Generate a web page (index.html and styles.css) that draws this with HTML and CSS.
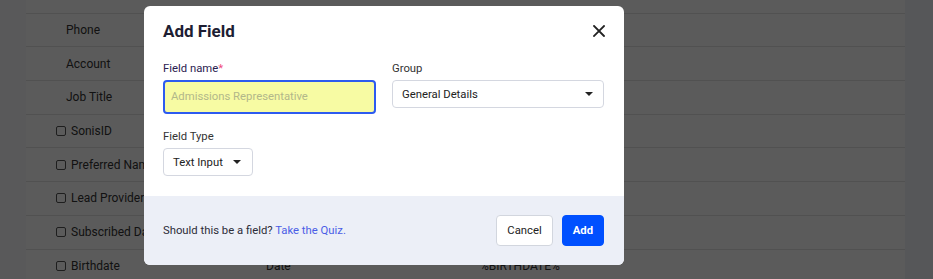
FILE: index.html
```html
<!DOCTYPE html>
<html>
<head>
    <title>Add Field</title>
    <link rel="stylesheet" href="styles.css">
</head>
<body>
<div class="page">
    <div class="side"></div>
    <div class="fields">
        <div class="row"><span class="c1"></span><span class="c2"></span><span class="c3"></span></div>
        <div class="row"><span class="c1 plain">Phone</span><span class="c2"></span><span class="c3"></span></div>
        <div class="row"><span class="c1 plain">Account</span><span class="c2"></span><span class="c3"></span></div>
        <div class="row"><span class="c1 plain">Job Title</span><span class="c2"></span><span class="c3"></span></div>
        <div class="row"><span class="c1"><i class="box"></i>SonisID</span><span class="c2"></span><span class="c3"></span></div>
        <div class="row"><span class="c1"><i class="box"></i>Preferred Name</span><span class="c2"></span><span class="c3"></span></div>
        <div class="row"><span class="c1"><i class="box"></i>Lead Provider</span><span class="c2"></span><span class="c3"></span></div>
        <div class="row"><span class="c1"><i class="box"></i>Subscribed Date</span><span class="c2"></span><span class="c3"></span></div>
        <div class="row"><span class="c1"><i class="box"></i>Birthdate</span><span class="c2">Date</span><span class="c3">%BIRTHDATE%</span></div>
    </div>
    <div class="side right"></div>
</div>

<div class="overlay">
    <div class="modal">
        <div class="modal-header">
            <h2>Add Field</h2>
            <svg class="close" width="12" height="12" viewBox="0 0 12 12">
                <path d="M1 1L11 11M11 1L1 11" stroke="#222" stroke-width="1.8" stroke-linecap="square"/>
            </svg>
        </div>
        <div class="modal-body">
            <div class="field">
                <label class="req">Field name<b>*</b></label>
                <div class="input">Admissions Representative</div>
            </div>
            <div class="field">
                <label>Group</label>
                <div class="select wide"><span>General Details</span><i class="caret"></i></div>
            </div>
            <div class="field second">
                <label>Field Type</label>
                <div class="select"><span>Text Input</span><i class="caret"></i></div>
            </div>
        </div>
        <div class="modal-footer">
            <p>Should this be a field? <a href="#">Take the Quiz.</a></p>
            <div class="buttons">
                <button class="btn">Cancel</button>
                <button class="btn primary">Add</button>
            </div>
        </div>
    </div>
</div>
</body>
</html>
```

FILE: styles.css
```css
html, body {
    width: 100%;
    height: 100%;
    padding: 0px;
    margin: 0px;
    overflow: hidden;
}

body {
    font-family: Roboto, "Liberation Sans", sans-serif;
    font-size: 11.3px;
    color: #333;
    background-color: #f6f7fa;
}

.page {
    display: flex;
    height: 100%;
}

.side {
    width: 26px;
    background-color: #f9fafc;
}
.side.right {
    width: 28px;
    background-color: #f2f4f8;
}

.fields {
    flex: 1;
    background-color: #fff;
    margin-top: -20px;
    font-size: 12px;
}

.row {
    display: flex;
    align-items: center;
    height: 32.7px;
    border-bottom: 1px solid #e4e4e4;
}

.c1 {
    box-sizing: border-box;
    display: flex;
    align-items: center;
    width: 240px;
    padding-left: 30px;
    white-space: nowrap;
    overflow: hidden;
}
.c1.plain {
    padding-left: 40px;
}
.c2 {
    width: 214px;
}
.c3 {
    flex: 1;
}

.box {
    width: 8px;
    height: 8px;
    border: 1px solid #555;
    border-radius: 2px;
    margin-right: 5px;
}

.overlay {
    position: absolute;
    top: 0px;
    left: 0px;
    right: 0px;
    bottom: 0px;
    background-color: rgba(0, 0, 0, 0.645);
    padding: 6px 0px 0px 144px;
}

.modal {
    width: 480px;
    background-color: #fff;
    border-radius: 6px;
    overflow: hidden;
}

.modal-header {
    display: flex;
    justify-content: space-between;
    align-items: center;
    padding: 10px 19px 0px 19px;
}
.modal-header h2 {
    margin: 0px;
    font-size: 17px;
    line-height: 30px;
    font-weight: bold;
    color: #1d1e33;
}

.modal-body {
    display: grid;
    grid-template-columns: 213px 212px;
    column-gap: 16px;
    padding: 16px 20px 20px 19px;
}

.field label {
    display: block;
    line-height: 14px;
    margin-bottom: 4px;
    color: #333;
}
.field label.req {
    color: #2b2150;
}
.field label b {
    color: #ef4a7d;
    font-weight: normal;
}
.field.second {
    margin-top: 16px;
}

.input {
    box-sizing: border-box;
    height: 34px;
    border: 2px solid #2d5bf0;
    border-radius: 4px;
    background-color: #f7fba3;
    color: #b2b78a;
    padding: 0px 6px;
    line-height: 30px;
}

.select {
    box-sizing: border-box;
    display: inline-flex;
    align-items: center;
    gap: 10px;
    height: 28px;
    border: 1px solid #d4d7e0;
    border-radius: 4px;
    padding: 0px 11px 0px 9px;
    color: #222;
}
.select.wide {
    display: flex;
    justify-content: space-between;
    padding-right: 10px;
}

.caret {
    width: 0px;
    height: 0px;
    border-left: 4px solid transparent;
    border-right: 4px solid transparent;
    border-top: 4px solid #222;
}

.modal-footer {
    display: flex;
    justify-content: space-between;
    align-items: center;
    background-color: #eceff7;
    padding: 19px 20px 19px 19px;
}
.modal-footer p {
    margin: 0px;
    color: #2c2c38;
}
.modal-footer a {
    color: #4a5de6;
    text-decoration: none;
}

.buttons {
    display: flex;
    gap: 9px;
}

.btn {
    height: 31px;
    padding: 0px 10px;
    border: 1px solid #d2d6de;
    border-radius: 4px;
    background-color: #fff;
    color: #222;
    font-family: Roboto, "Liberation Sans", sans-serif;
    font-size: 11.3px;
}
.btn.primary {
    border-color: #0050ff;
    background-color: #0050ff;
    color: #fff;
    font-weight: bold;
    padding: 0px 10px;
}
```
